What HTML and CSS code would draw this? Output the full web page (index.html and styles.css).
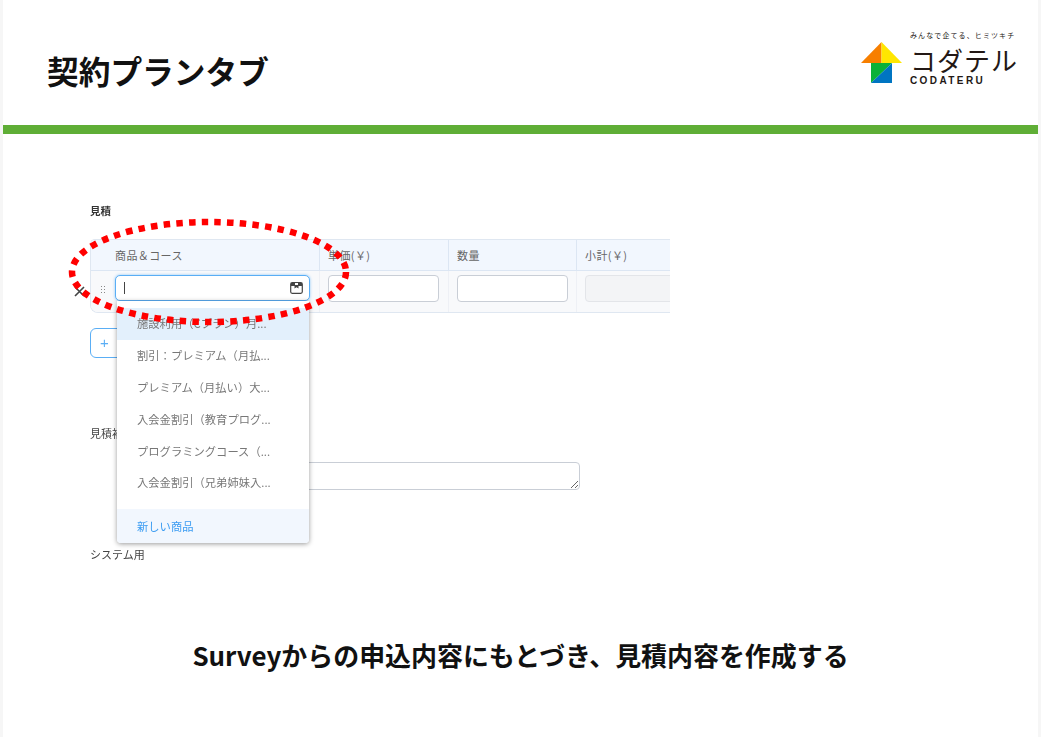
FILE: index.html
```html
<!DOCTYPE html>
<html lang="ja">

<head>
    <meta charset="UTF-8">
    <title>契約プランタブ</title>
    <link rel="stylesheet" href="styles.css">
</head>

<body>
    <div class="slide">
        <header class="slide-header">
            <h1 class="slide-title">契約プランタブ</h1>
            <div class="logo">
                <svg class="logo-mark" width="42" height="42" viewBox="0 0 42 42">
                    <polygon points="20.5,0 20.5,21 0,21" fill="#f77f00" />
                    <polygon points="20.5,0 20.5,21 41,21" fill="#ffe600" />
                    <polygon points="10,21 31,21 10,41" fill="#0bb138" />
                    <polygon points="31,21 31,41 10,41" fill="#0075c2" />
                </svg>
                <div class="logo-text">
                    <span class="logo-tagline">みんなで企てる、ヒミツキチ</span>
                    <span class="logo-name">コダテル</span>
                    <span class="logo-latin">CODATERU</span>
                </div>
            </div>
        </header>
        <div class="green-bar"></div>

        <main class="slide-body">
            <div class="estimate">
                <div class="estimate-shot">
                    <div class="field-label bold">見積</div>

                    <div class="table">
                        <div class="th first">商品＆コース</div>
                        <div class="th">単価(￥)</div>
                        <div class="th">数量</div>
                        <div class="th">小計(￥)</div>

                        <div class="td first">
                            <span class="handle"></span>
                            <div class="search focus">
                                <span class="caret"></span>
                                <svg width="13" height="12" viewBox="0 0 13 12">
                                    <rect x="0.7" y="0.7" width="11.6" height="10.6" rx="1.5" fill="#fff" stroke="#444" stroke-width="1.2" />
                                    <rect x="1" y="1" width="11" height="3" fill="#444" />
                                    <rect x="5" y="1" width="3" height="2" fill="#fff" />
                                    <polygon points="4.5,3 8.5,3 8.5,6.5 6.5,5.2 4.5,6.5" fill="#444" />
                                </svg>
                            </div>
                        </div>
                        <div class="td"><input class="cell-input" type="text"></div>
                        <div class="td"><input class="cell-input" type="text"></div>
                        <div class="td"><input class="cell-input disabled" type="text" disabled></div>
                    </div>

                    <button class="add-btn">+</button>

                    <div class="field-label second">見積補足</div>
                    <textarea class="note"></textarea>
                    <div class="field-label third">システム用</div>

                    <!-- 행 삭제 -->
                    <svg class="remove" width="11" height="11" viewBox="0 0 11 11">
                        <path d="M1 1L10 10M10 1L1 10" stroke="#444" stroke-width="1.6" />
                    </svg>

                    <div class="dropdown">
                        <ul class="dropdown-list">
                            <li class="active">施設利用（Cプラン）月...</li>
                            <li>割引：プレミアム（月払...</li>
                            <li>プレミアム（月払い）大...</li>
                            <li>入会金割引（教育プログ...</li>
                            <li>プログラミングコース（...</li>
                            <li>入会金割引（兄弟姉妹入...</li>
                        </ul>
                        <div class="dropdown-new">新しい商品</div>
                    </div>
                </div>

                <svg class="marker" width="290" height="116" viewBox="0 0 290 116">
                    <ellipse cx="144" cy="56" rx="137" ry="50" fill="none" stroke="#ff0000" stroke-width="6.5" stroke-dasharray="6.5 6.2" />
                </svg>
            </div>

            <p class="caption">Surveyからの申込内容にもとづき、見積内容を作成する</p>
        </main>
    </div>
</body>

</html>
```

FILE: styles.css
```css
* {
    box-sizing: border-box;
}

body {
    margin: 0;
    padding: 0 3px;
    background-color: #f6f6f6;
    font-family: "Noto Sans CJK JP", "Noto Sans", sans-serif;
}

.slide {
    height: 737px;
    background-color: #fff;
    overflow: hidden;
}

.slide-header {
    display: flex;
    justify-content: space-between;
    height: 125px;
    padding: 0 20px 0 44px;
}

.slide-title {
    margin: 49px 0 0;
    font-size: 31.7px;
    line-height: 42px;
    font-weight: 700;
    color: #111;
}

.logo {
    display: flex;
    align-items: flex-start;
    gap: 7px;
    padding-top: 30px;
}

.logo-mark {
    margin-top: 12px;
}

.logo-text {
    display: flex;
    flex-direction: column;
    width: 108px;
    color: #231815;
}

.logo-tagline {
    font-size: 7px;
    line-height: 10px;
    letter-spacing: 1.1px;
    white-space: nowrap;
}

.logo-name {
    margin-top: 4px;
    font-size: 26px;
    line-height: 31px;
    font-weight: 400;
    letter-spacing: 1px;
    white-space: nowrap;
}

.logo-latin {
    font-size: 10px;
    line-height: 11px;
    font-weight: 700;
    letter-spacing: 2.4px;
    font-family: "Liberation Sans", sans-serif;
}

.green-bar {
    height: 9px;
    background-color: #5fae36;
}

.slide-body {
    display: flex;
    flex-direction: column;
}

/* 見積 area */
.estimate {
    position: relative;
    width: 580px;
    height: 434px;
    margin: 70px 0 0 87px;
}

.estimate-shot {
    height: 100%;
    filter: blur(0.35px);
}

.field-label {
    font-size: 11px;
    line-height: 14px;
    color: #444;
}

.field-label.bold {
    font-size: 10.5px;
    font-weight: 700;
    color: #333;
}

.field-label.second {
    margin-top: 68px;
}

.field-label.third {
    margin-top: 57px;
}

.table {
    display: grid;
    grid-template-columns: 229px 129px 128px 94px;
    grid-template-rows: 31px 41px;
    margin-top: 21px;
    border: solid #dfe7f1;
    border-width: 1px 0 1px 1px;
    border-radius: 5px 0 0 8px;
    overflow: hidden;
}

.th {
    display: flex;
    align-items: center;
    padding-left: 8px;
    font-size: 11px;
    letter-spacing: 0.4px;
    color: #666;
    background-color: #f2f7fe;
    border-right: 1px solid #dce6f3;
    border-bottom: 1px solid #dce6f3;
}

.th.first {
    padding-left: 24px;
}

.td {
    display: flex;
    padding: 4px 8px 0;
    background-color: #f8f9fb;
    border-right: 1px solid #eef0f5;
}

.td.first {
    position: relative;
    padding-left: 24px;
}

.td:last-child,
.th:last-child {
    border-right: 0;
}

.handle {
    position: absolute;
    left: 9px;
    top: 14px;
    width: 6px;
    height: 9px;
    background-image: radial-gradient(circle, #888 1px, transparent 1px);
    background-size: 3px 3px;
}

.search {
    display: flex;
    align-items: center;
    justify-content: space-between;
    width: 195px;
    height: 26px;
    padding: 0 6px 0 8px;
    background-color: #fff;
    border: 1px solid #5aaef5;
    border-radius: 5px;
    box-shadow: 0 0 3px #8cc6f7;
}

.caret {
    width: 1px;
    height: 12px;
    background-color: #444;
}

.cell-input {
    width: 111px;
    height: 27px;
    background-color: #fff;
    border: 1px solid #c9ced6;
    border-radius: 4px;
}

.cell-input.disabled {
    width: 120px;
    background-color: #f3f4f6;
    border-color: #e3e5e9;
}

.add-btn {
    display: block;
    width: 60px;
    height: 30px;
    margin-top: 15px;
    padding: 0 0 0 9px;
    font-size: 15px;
    line-height: 26px;
    text-align: left;
    color: #5aaef5;
    background-color: #fff;
    border: 1px solid #5aaef5;
    border-radius: 6px;
}

.note {
    display: block;
    width: 430px;
    height: 28px;
    margin: 22px 0 0 60px;
    border: 1px solid #c9ced6;
    border-radius: 4px;
    outline: none;
}

.remove {
    position: absolute;
    left: -16px;
    top: 82px;
}

.dropdown {
    position: absolute;
    left: 27px;
    top: 97px;
    width: 192px;
    height: 242px;
    background-color: #fff;
    border-radius: 0 0 4px 4px;
    box-shadow: 0 1px 5px rgba(0, 0, 0, 0.4);
    overflow: hidden;
}

.dropdown-list {
    margin: 0;
    padding: 7px 0 9.6px;
    list-style: none;
}

.dropdown-list li {
    height: 31.9px;
    padding-left: 20px;
    font-size: 11.3px;
    line-height: 31px;
    color: #777;
    white-space: nowrap;
}

.dropdown-list .active {
    background-color: #e3f0fc;
}

.dropdown-new {
    height: 34px;
    padding-left: 20px;
    font-size: 11.3px;
    line-height: 34px;
    color: #3b9cf2;
    background-color: #f2f7fe;
}

.marker {
    position: absolute;
    left: -25px;
    top: 12px;
    pointer-events: none;
}

.caption {
    margin: 0;
    font-size: 25.95px;
    line-height: 34px;
    font-weight: 700;
    text-align: center;
    color: #111;
}
```
